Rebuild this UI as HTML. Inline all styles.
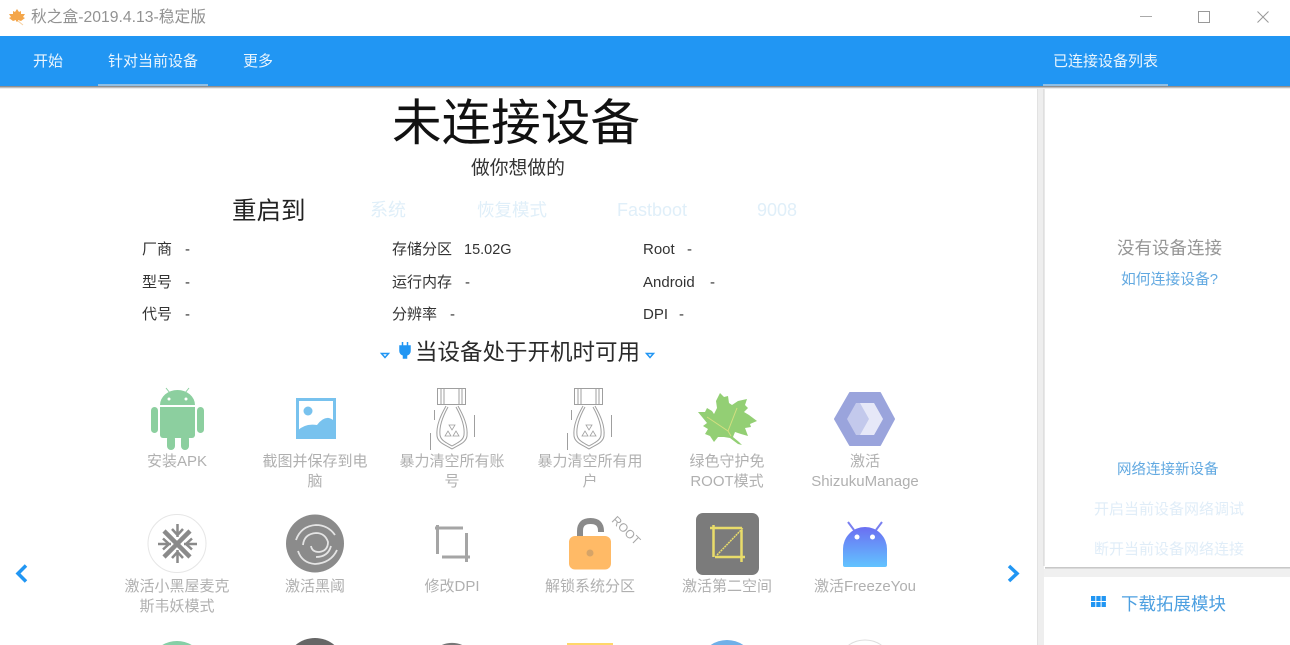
<!DOCTYPE html>
<html lang="zh"><head><meta charset="utf-8"><title>秋之盒</title>
<style>
*{box-sizing:border-box}
html,body{margin:0;padding:0;width:1290px;height:645px;overflow:hidden;background:#fff}
body{position:relative;font-family:"Liberation Sans","Noto Sans CJK SC",sans-serif;color:#111}
.t{position:absolute;white-space:nowrap;line-height:20px}
.c{position:absolute;text-align:center;line-height:20px;color:#b0b0b0;font-size:15px;width:124px}
.i{position:absolute;left:0;top:0}
</style></head><body>
<svg class="i" width="1290" height="645" viewBox="0 0 1290 645" fill="none">
<!-- app icon -->
<path d="M17 9l2 3 2-1 0 3 4 0-2 3 2 1-4 3-3-1 0 1-1 1-1-1 0-1-3 1-4-3 2-1-2-3 4 0 0-3 2 1z" fill="#f4a64a"/>
<path d="M18 21l5 4" stroke="#f6cfa0"/>
<!-- window buttons -->
<path d="M1140 16.500h12" stroke="#aaa"/><rect x="1198.500" y="11.500" width="11" height="11" stroke="#999"/><path d="M1257.500 11.500l11 11m0-11l-11 11" stroke="#999"/>
<!-- toolbar -->
<rect x="0" y="36" width="1290" height="50" fill="#2196f3"/>
<rect x="0" y="86" width="1290" height="1" fill="#8f8f8f"/><rect x="0" y="87" width="1290" height="1" fill="#bdbdbd"/><rect x="0" y="88" width="1290" height="1" fill="#ebebeb"/>
<rect x="98" y="84" width="110" height="2" fill="#90bfe4"/><rect x="1043" y="84" width="125" height="2" fill="#90bfe4"/>
<!-- right panels -->
<rect x="1037" y="89" width="7" height="556" fill="#eeeeee"/><rect x="1037" y="89" width="1" height="556" fill="#e2e2e2"/><rect x="1043.500" y="89" width="1" height="477" fill="#d0d0d0"/>
<rect x="1045" y="567" width="245" height="1" fill="#c8c8c8"/><rect x="1045" y="568" width="245" height="1" fill="#dadada"/><rect x="1044" y="569" width="246" height="8" fill="#f0f0f0"/>
<rect x="1091" y="596" width="4.300" height="5" fill="#2196f3"/><rect x="1096.300" y="596" width="4.300" height="5" fill="#2196f3"/><rect x="1101.600" y="596" width="4.300" height="5" fill="#2196f3"/>
<rect x="1091" y="602" width="4.300" height="5" fill="#2196f3"/><rect x="1096.300" y="602" width="4.300" height="5" fill="#2196f3"/><rect x="1101.600" y="602" width="4.300" height="5" fill="#2196f3"/>
<!-- heading icons -->
<path d="M381.500 353.500h7l-3.500 4z" stroke="#2196f3" stroke-width="1.500"/><path d="M646.500 353.500h7l-3.500 4z" stroke="#2196f3" stroke-width="1.500"/>
<path d="M402.500 342v4M407.500 342v4M400 346h10v5a4 4 0 0 1-3.500 4v3h-3v-3a4 4 0 0 1-3.500-4z" fill="#2196f3" stroke="#2196f3" stroke-width="1.500"/>
<!-- nav arrows -->
<path d="M26 565.500l-8 8 8 8" stroke="#2196f3" stroke-width="3.500"/><path d="M1009 566l8 7.500-8 7.500" stroke="#2196f3" stroke-width="3.500"/>
<!-- android -->
<g fill="#8ccf9f"><rect x="151" y="407" width="7" height="26" rx="3.500"/><rect x="197" y="407" width="7" height="26" rx="3.500"/><path d="M160 407h35v28a3 3 0 0 1-3 3h-29a3 3 0 0 1-3-3z"/><rect x="167" y="435" width="8" height="15" rx="4"/><rect x="181" y="435" width="8" height="15" rx="4"/><path d="M160 405a17.500 15 0 0 1 35 0z"/></g>
<path d="M166 388l4 5M189 388l-4 5" stroke="#8ccf9f"/><circle cx="169" cy="399" r="1.500" fill="#fff"/><circle cx="186" cy="399" r="1.500" fill="#fff"/>
<!-- picture -->
<rect x="297.500" y="399.500" width="37" height="38" fill="#fff" stroke="#78c2ee" stroke-width="3"/><circle cx="308" cy="411" r="4.500" fill="#78c2ee"/><path d="M297 431q8-8 20-6q6-8 12-7q4 1 7 5v16h-39z" fill="#78c2ee"/>
<!-- bombs -->
<g stroke="#9f9f9f"><rect x="437.500" y="388.500" width="28" height="16"/><path d="M441 389v15M444 389v15M459 389v15M462 389v15"/><path d="M446 406C441 415 436 425 437 436C438 443 446 445 452 449C458 445 466 443 467 436C468 425 463 415 458 406"/><path d="M448 407C443 416 439 426 440 435C441 441 447 443 452 446C457 443 463 441 464 435C465 426 461 416 456 407"/><path d="M434.500 410v10M474.500 415v22M430.500 433v17"/><path d="M449 425l3 5 3-5zM445 436h6l-3-5zM453 436h6l-3-5z" stroke-width=".8"/></g>
<g transform="translate(137 0)" stroke="#9f9f9f"><rect x="437.500" y="388.500" width="28" height="16"/><path d="M441 389v15M444 389v15M459 389v15M462 389v15"/><path d="M446 406C441 415 436 425 437 436C438 443 446 445 452 449C458 445 466 443 467 436C468 425 463 415 458 406"/><path d="M448 407C443 416 439 426 440 435C441 441 447 443 452 446C457 443 463 441 464 435C465 426 461 416 456 407"/><path d="M434.500 410v10M474.500 415v22M430.500 433v17"/><path d="M449 425l3 5 3-5zM445 436h6l-3-5zM453 436h6l-3-5z" stroke-width=".8"/></g>
<!-- leaf -->
<path d="M720 393L724 397L728 396L729 403L732 405L738 401L747 399L745 405L748 408L744 412L749 415L757 421L750 424L751 427L745 428L748 436L741 434L735 432L733 437L739 442L742 445L738 444L730 438L724 437L718 437L714 442L710 436L705 434L708 429L703 426L707 423L698 412L705 412L707 408L712 411L714 414L717 408L716 401z" fill="#93cf74"/>
<path d="M707 417L728 431L737 408M728 431L731 436" stroke="#d3df80"/>
<!-- hexagon -->
<path d="M850 393H880L894 419L880 445H850L835 419z" fill="#9aa4dc" stroke="#9aa4dc" stroke-linejoin="round" stroke-width="2"/><path d="M856 403h18l9 16-9 16h-18l-9-16z" fill="#c3c9ec"/><path d="M860 403h14l9 16-9 16h-14l9-16z" fill="#e6e8f8"/>
<!-- row 2 -->
<circle cx="177" cy="543.500" r="29" fill="#fff" stroke="#e6e6e6"/>
<path d="M164 531L190 557M190 531L164 557" stroke="#8a8a8a" stroke-width="4.500"/>
<path d="M177.500 524v13M172 529l5.500 6 5.500-6M177.500 563v-13M172 558l5.500-6 5.500 6M158 544h13M163 538.500l6 5.500-6 5.500M197 544h-13M192 538.500l-6 5.500 6 5.500" stroke="#8a8a8a" stroke-width="2.500"/>
<circle cx="315" cy="543.500" r="29" fill="#8b8b8b"/>
<path d="M296 540q5-14 20-15q12 0 19 10M337 550q-6 13-22 14q-13-1-17-13M303 545q1-11 13-12q9 0 12 9q0 9-9 10q-7 0-8-6M331 546q-3 11-15 11" stroke="#e4e4e4" stroke-width="1.800"/>
<path d="M435 528h28M437.500 525v29M442 557h28M466.500 533v29" stroke="#a5a5a5" stroke-width="3"/>
<path d="M580 537v-6q0-10 10.500-10t10.500 10v1" stroke="#8a8a8a" stroke-width="6"/>
<rect x="569" y="536" width="42" height="33.500" rx="6" fill="#ffba66"/><circle cx="590" cy="553" r="3.500" fill="#d6a468"/>
<text x="611" y="521" transform="rotate(45 611 521)" font-family="Liberation Sans" font-size="12" fill="#a8a8a8">ROOT</text>
<rect x="696" y="513" width="63" height="62" rx="7" fill="#7b7b7b"/>
<path d="M710 528h32M713.500 525v32M715 557h30M741.500 530v32" stroke="#e9dc6a" stroke-width="2.500"/><path d="M717 555l26-27" stroke="#e9dc6a" stroke-width="1.500" stroke-dasharray="2 .7"/>
<path d="M848 522l6 8M882 522l-6 8" stroke="#7a80f0" stroke-width="2"/>
<defs><linearGradient id="fz" x1="0" y1="0" x2="0" y2="1"><stop offset="0" stop-color="#6b6ff2"/><stop offset="1" stop-color="#62c3ff"/></linearGradient></defs>
<path d="M843 565v-16a22 22 0 0 1 44 0v16a2 2 0 0 1-2 2h-40a2 2 0 0 1-2-2z" fill="url(#fz)"/><circle cx="857" cy="537" r="2.500" fill="#fff"/><circle cx="872.500" cy="537" r="2.500" fill="#fff"/>
<!-- row 3 peeking -->
<path d="M162.300 645A29 29 0 0 1 191.700 645z" fill="#86cfa6"/>
<path d="M295.700 645A30 30 0 0 1 334.300 645z" fill="#666"/>
<path d="M441.800 645A27 27 0 0 1 462.200 645z" fill="#777"/>
<rect x="567" y="643" width="46" height="2" fill="#ffd76a"/>
<path d="M710.700 645A29 29 0 0 1 743.300 645z" fill="#70b0e8"/>
<path d="M848.700 645A29 29 0 0 1 881.300 645" stroke="#ddd"/>
</svg>

<div class="t" style="left:31px;top:8px;font-size:15.750px;color:#929292">秋之盒-2019.4.13-稳定版</div>
<div class="t" style="left:33px;top:51px;font-size:15px;line-height:21px;color:#eaf5fe">开始</div>
<div class="t" style="left:108px;top:51px;font-size:15px;line-height:21px;color:#eaf5fe">针对当前设备</div>
<div class="t" style="left:243px;top:51px;font-size:15px;line-height:21px;color:#eaf5fe">更多</div>
<div class="t" style="left:1053px;top:51px;font-size:15px;line-height:21px;color:#eaf5fe">已连接设备列表</div>

<div class="t" style="left:392px;top:93px;font-size:49.600px;line-height:60px;color:#111">未连接设备</div>
<div class="t" style="left:471px;top:158px;font-size:18.800px;color:#333">做你想做的</div>
<div class="t" style="left:232px;top:202px;font-size:24.500px;color:#222">重启到</div>
<div class="t" style="left:370px;top:200px;font-size:18px;color:#e0eff9">系统</div>
<div class="t" style="left:477px;top:200px;font-size:17.500px;color:#e0eff9">恢复模式</div>
<div class="t" style="left:617px;top:200px;font-size:18px;color:#e0eff9">Fastboot</div>
<div class="t" style="left:757px;top:200px;font-size:18px;color:#e0eff9">9008</div>

<div class="t" style="left:142px;top:240px;font-size:15px;color:#333">厂商</div><div class="t" style="left:185px;top:240px;font-size:15px;color:#333">-</div>
<div class="t" style="left:142px;top:273px;font-size:15px;color:#333">型号</div><div class="t" style="left:185px;top:273px;font-size:15px;color:#333">-</div>
<div class="t" style="left:142px;top:305px;font-size:15px;color:#333">代号</div><div class="t" style="left:185px;top:305px;font-size:15px;color:#333">-</div>
<div class="t" style="left:392px;top:240px;font-size:15px;color:#333">存储分区</div><div class="t" style="left:464px;top:240px;font-size:14.500px;color:#333">15.02G</div>
<div class="t" style="left:392px;top:273px;font-size:15px;color:#333">运行内存</div><div class="t" style="left:465px;top:273px;font-size:15px;color:#333">-</div>
<div class="t" style="left:392px;top:305px;font-size:15px;color:#333">分辨率</div><div class="t" style="left:450px;top:305px;font-size:15px;color:#333">-</div>
<div class="t" style="left:643px;top:240px;font-size:15px;color:#333">Root</div><div class="t" style="left:687px;top:240px;font-size:15px;color:#333">-</div>
<div class="t" style="left:643px;top:273px;font-size:15px;color:#333">Android</div><div class="t" style="left:710px;top:273px;font-size:15px;color:#333">-</div>
<div class="t" style="left:643px;top:305px;font-size:15px;color:#333">DPI</div><div class="t" style="left:679px;top:305px;font-size:15px;color:#333">-</div>

<div class="t" style="left:415px;top:341px;font-size:22.500px;line-height:24px;color:#2a2a2a">当设备处于开机时可用</div>

<div class="c" style="left:115px;top:452px">安装APK</div>
<div class="c" style="left:253px;top:452px">截图并保存到电<br>脑</div>
<div class="c" style="left:390px;top:452px">暴力清空所有账<br>号</div>
<div class="c" style="left:528px;top:452px">暴力清空所有用<br>户</div>
<div class="c" style="left:665px;top:452px">绿色守护免<br>ROOT模式</div>
<div class="c" style="left:803px;top:452px">激活<br>ShizukuManage</div>
<div class="c" style="left:115px;top:577px">激活小黑屋麦克<br>斯韦妖模式</div>
<div class="c" style="left:253px;top:577px">激活黑阈</div>
<div class="c" style="left:390px;top:577px">修改DPI</div>
<div class="c" style="left:528px;top:577px">解锁系统分区</div>
<div class="c" style="left:665px;top:577px">激活第二空间</div>
<div class="c" style="left:803px;top:577px">激活FreezeYou</div>

<div class="t" style="left:1117px;top:238px;font-size:17.500px;color:#969696">没有设备连接</div>
<div class="t" style="left:1121px;top:270px;font-size:14.800px;color:#62a9e1">如何连接设备?</div>
<div class="t" style="left:1117px;top:460px;font-size:14.500px;color:#62a9e1">网络连接新设备</div>
<div class="t" style="left:1094px;top:500px;font-size:15px;color:#e0edf8">开启当前设备网络调试</div>
<div class="t" style="left:1094px;top:540px;font-size:15px;color:#e0edf8">断开当前设备网络连接</div>
<div class="t" style="left:1121px;top:594px;font-size:17.500px;color:#4c9fe0">下载拓展模块</div>
</body></html>
